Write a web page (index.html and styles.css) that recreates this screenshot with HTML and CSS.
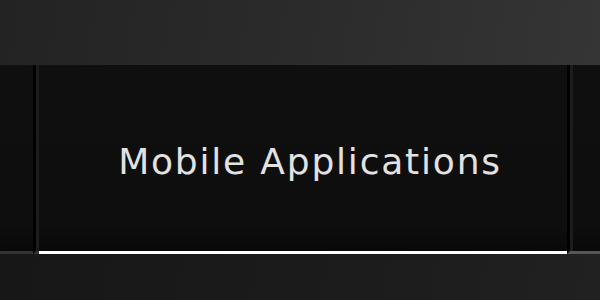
FILE: index.html
```html
<!DOCTYPE html>
<html lang="en">
<head>
  <meta charset="UTF-8">
  <meta name="viewport" content="width=device-width, initial-scale=1.0">
  <title>Mobile Applications</title>
  <link rel="stylesheet" href="styles.css">
</head>
<body>
  <div class="topbar"></div>

  <div class="tabs">
    <div class="tab-edge tab-edge-left"></div>
    <div class="divider"></div>
    <div class="tab active">
      <span class="tab-label">Mobile Applications</span>
    </div>
    <div class="divider"></div>
    <div class="tab-edge tab-edge-right"></div>
  </div>

  <div class="footer"></div>
</body>
</html>
```

FILE: styles.css
```css
body {
  margin: 0;
  width: 600px;
  height: 300px;
  overflow: hidden;
  background: #1b1b1b;
  font-family: "DejaVu Sans", Verdana, sans-serif;
}
.topbar {
  height: 65px;
  background: linear-gradient(100deg, #232323 0%, #2b2b2b 50%, #353535 100%);
}
.tabs {
  display: flex;
  height: 189px;
  background: linear-gradient(#0f0f0f 0%, #0e0e0e 85%, #080808 100%);
}
.tab-edge {
  border-bottom: 3px solid #333;
}
.tab-edge-left {
  width: 33px;
}
.tab-edge-right {
  flex: 1;
  border-bottom-color: #565656;
}
.divider {
  width: 3px;
  border-left: 3px solid #000;
  background: #1c1c1c;
  border-bottom: 3px solid #333;
}
.tabs .divider:nth-child(4) {
  border-bottom-color: #565656;
}
.tab {
  width: 528px;
  display: flex;
  align-items: center;
  justify-content: center;
  border-bottom: 3px solid #fff;
}
.tab-label {
  color: #e2e2e2;
  font-size: 36px;
  letter-spacing: 1.8px;
  padding-left: 14px;
  padding-top: 6px;
}
.footer {
  height: 46px;
  background: linear-gradient(100deg, #171717 0%, #1c1c1c 60%, #212121 100%);
}
```
